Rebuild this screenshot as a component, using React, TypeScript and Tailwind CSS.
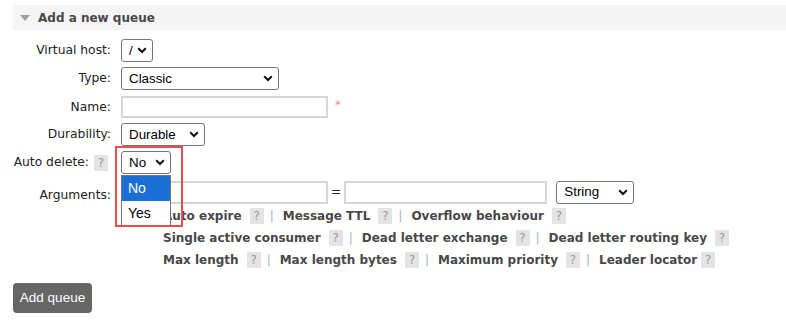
import React from "react";

function Chevron() {
  return (
    <svg width="10" height="7" viewBox="0 0 10 7" className="shrink-0">
      <path d="M1.2 1.3 L5 5 L8.8 1.3" fill="none" stroke="#111" strokeWidth="2" />
    </svg>
  );
}

function Select({ value, width }: { value: string; width: string }) {
  return (
    <div
      className={`${width} flex h-[23px] items-center justify-between rounded-[3px] border border-[#767676] bg-white pl-[7px] pr-[5px] font-['Liberation_Sans',Arial,sans-serif] text-[13.33px] text-black`}
    >
      <span>{value}</span>
      <Chevron />
    </div>
  );
}

function TextInput({ width }: { width: string }) {
  return <div className={`${width} h-[23px] border-2 border-[#d6d6d6] bg-white`} />;
}

function Help() {
  return (
    <span className="inline-flex h-[16px] w-[14px] items-center justify-center bg-[#e4e4e4] text-[12px] font-normal text-[#9a9a9a]">
      ?
    </span>
  );
}

function Row({
  label,
  help,
  children,
  className,
  labelClass,
}: {
  label: string;
  help?: boolean;
  children: React.ReactNode;
  className?: string;
  labelClass?: string;
}) {
  return (
    <div className={`flex items-center ${className ?? ""}`}>
      <div className={`flex w-[98px] shrink-0 items-center justify-end gap-[5px] ${help ? "pr-[3px]" : ""} ${labelClass ?? ""}`}>
        <span>{label}</span>
        {help && <Help />}
      </div>
      <div className="ml-[10px] flex items-center">{children}</div>
    </div>
  );
}

function Link({ text, last, tight }: { text: string; last?: boolean; tight?: boolean }) {
  return (
    <>
      <span className="font-bold text-[#484848]">{text}</span>
      <span className={tight ? "ml-[4px]" : "ml-[8px]"}>
        <Help />
      </span>
      {!last && <span className="ml-[6px] mr-[9px] text-[#9fb3cc]">|</span>}
    </>
  );
}

export default function App() {
  return (
    <div className="relative min-h-[323px] bg-white pl-[13px] pt-[5px] font-['DejaVu_Sans',Verdana,sans-serif] text-[12.3px] text-[#222]">
      <div className="flex h-[25px] items-center bg-[#f5f5f5]">
        <svg width="10" height="6" viewBox="0 0 10 6" className="ml-[7px]">
          <path d="M0 0 H10 L5 6 Z" fill="#a0a0a0" />
        </svg>
        <span className="ml-[8px] text-[12px] font-bold text-[#484848]">Add a new queue</span>
      </div>

      <div className="mt-[9px] flex flex-col">
        <Row label="Virtual host:">
          <Select value="/" width="w-[32px]" />
        </Row>
        <Row label="Type:" className="mt-[5px]">
          <Select value="Classic" width="w-[158px]" />
        </Row>
        <Row label="Name:" className="mt-[6px]">
          <div className="h-[22px] w-[207px] border-2 border-[#d6d6d6]" />
          <span className="ml-[7px] -mt-[4px] text-[12px] text-[#ff8a80]">*</span>
        </Row>
        <Row label="Durability:" className="mt-[5px]">
          <Select value="Durable" width="w-[84px]" />
        </Row>
        <Row label="Auto delete:" help className="mt-[5px]">
          <Select value="No" width="w-[50px]" />
        </Row>
        <Row label="Arguments:" className="mt-[6px]" labelClass="pt-[6px]">
          <TextInput width="w-[207px]" />
          <span className="mx-[3px]">=</span>
          <TextInput width="w-[203px]" />
          <div className="ml-[9px]">
            <Select value="String" width="w-[78px]" />
          </div>
        </Row>

        {/* the "Add" cell sits under the open dropdown, so only its space shows */}
        <div className="ml-[150px] mt-px flex flex-col text-[12px]">
          <div className="flex h-[22px] items-center">
            <Link text="Auto expire" />
            <Link text="Message TTL" />
            <Link text="Overflow behaviour" last />
          </div>
          <div className="flex h-[22px] items-center">
            <Link text="Single active consumer" />
            <Link text="Dead letter exchange" />
            <Link text="Dead letter routing key" last />
          </div>
          <div className="flex h-[22px] items-center">
            <Link text="Max length" />
            <Link text="Max length bytes" />
            <Link text="Maximum priority" />
            <Link text="Leader locator" last tight />
          </div>
        </div>
      </div>

      <button className="mt-[12px] h-[30px] w-[79px] rounded-[4px] bg-[#666] font-['Liberation_Sans',Arial,sans-serif] text-[13.5px] text-white">
        Add queue
      </button>

      {/* open dropdown of the auto delete select */}
      <div className="absolute left-[121px] top-[175px] w-[50px] border border-[#767676] bg-white font-['Liberation_Sans',Arial,sans-serif] text-[14px]">
        <div className="flex h-[25px] items-center bg-[#1a6fd6] pl-[6px] text-white">No</div>
        <div className="flex h-[25px] items-center pl-[6px] text-black">Yes</div>
      </div>
      <div className="pointer-events-none absolute left-[115px] top-[146px] h-[81px] w-[68px] border-2 border-[#ef4a50]" />
    </div>
  );
}
